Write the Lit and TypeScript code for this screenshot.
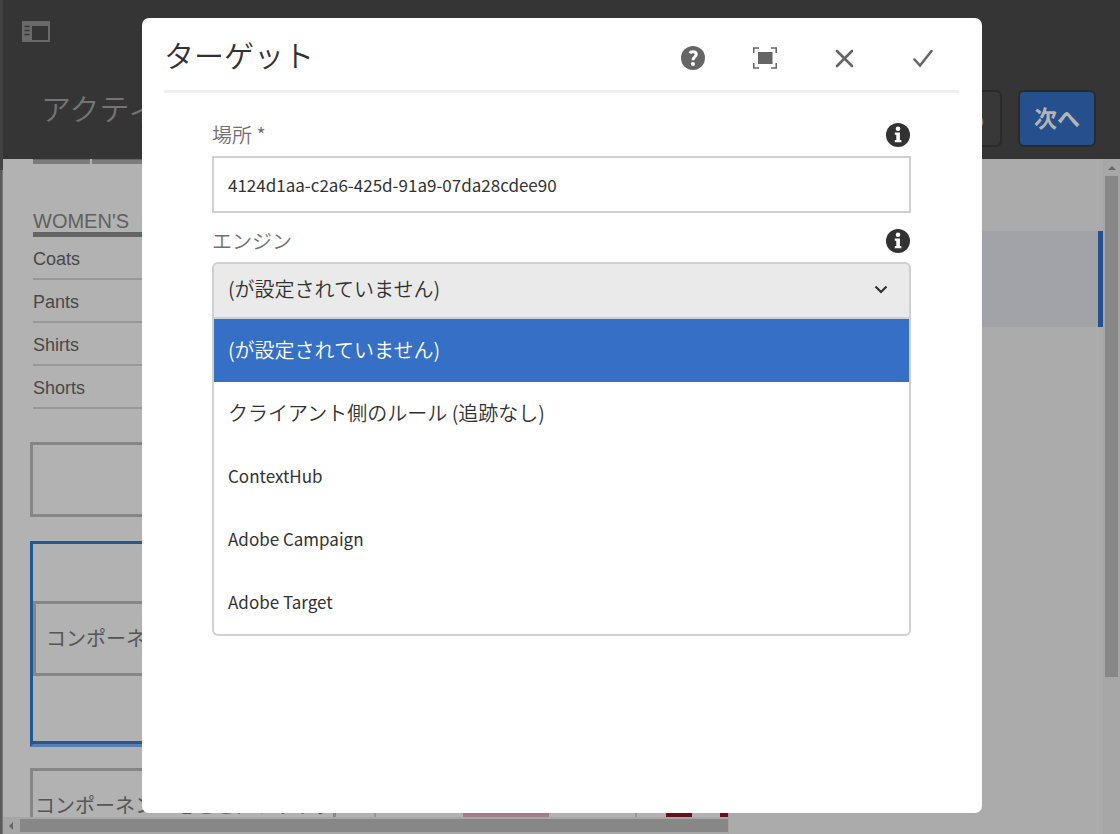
import { LitElement, html, svg, css } from "lit";
import { customElement, state } from "lit/decorators.js";
import { classMap } from "lit/directives/class-map.js";

const icons = {
  rail: svg`<rect width="28" height="21" rx="1" fill="#6a6a6a"/><rect x="10" y="5" width="16" height="14" fill="#353535"/><path d="M2.500 5.500h5M2.500 9.500h5M2.500 13.500h5" stroke="#353535" stroke-width="1.300"/>`,
  help: svg`<circle cx="12" cy="12" r="12" fill="#656565"/><path d="M8.700 7.200C9.700 5.300 14.900 4.700 15.300 8.200C15.500 10.600 12 11 12 14.200" fill="none" stroke="#fff" stroke-width="3"/><circle cx="11.900" cy="18" r="2.100" fill="#fff"/>`,
  full: svg`<path d="M.75 6V1H6M18 1H23.250V6M23.250 16V21H18M6 21H.75V16" fill="none" stroke="#656565" stroke-width="1.500"/><rect x="5" y="5" width="14.500" height="12" fill="#656565"/>`,
  close: svg`<path d="M2 2L17 17M17 2L2 17" stroke="#656565" stroke-width="2.600" stroke-linecap="round"/>`,
  check: svg`<path d="M1.500 10.500L7 16.500L18.500 2" fill="none" stroke="#656565" stroke-width="2.500" stroke-linecap="round"/>`,
  info: svg`<circle cx="12" cy="12" r="12" fill="#323232"/><circle cx="12" cy="5.800" r="2.300" fill="#fff"/><path d="M8.800 9.500H13.900V17H15.400V19.200H8.800V17H10.300V11.700H8.800Z" fill="#fff"/>`,
};

@customElement("app-root")
export class AppRoot extends LitElement {
  @state() selected = 0;

  private engines = [
    "(が設定されていません)",
    "クライアント側のルール (追跡なし)",
    "ContextHub",
    "Adobe Campaign",
    "Adobe Target",
  ];

  static styles = css`
    :host {
      display: grid;
      grid-template-columns: 3px minmax(0, 1fr);
      grid-template-rows: minmax(0, 1fr);
      position: relative;
      height: 100vh;
      overflow: hidden;
      background: #ababab;
      color: #323232;
      font-family: "Noto Sans CJK JP", sans-serif;
      font-size: 20px;
      line-height: 28px;
    }
    * { box-sizing: border-box; }
    button, input, select { font: inherit; color: inherit; margin: 0; }
    svg { display: block; flex: none; }
    .edge { display: grid; grid-template-rows: 170px 1fr; }
    .edge-top { background: #424242; }
    .edge-rest { background: #5b5b5b; border-right: 1px solid #777; }
    .page { display: grid; grid-template-rows: 159px minmax(0, 1fr); min-height: 0; }
    .topbar {
      background: #353535;
      display: flex;
      flex-direction: column;
      gap: 48px;
      padding: 21px 24px 0 19px;
    }
    .rail-toggle { border: 0; background: none; padding: 0; align-self: flex-start; }
    .title-row { display: flex; align-items: flex-start; gap: 16px; padding-left: 19px; }
    .title-row h1 {
      flex: 1;
      margin: 0;
      font-size: 30px;
      line-height: 34px;
      font-weight: 350;
      color: #747474;
    }
    .btn {
      height: 57px;
      padding: 0 14px 4px;
      border: 2px solid #2a2a2a;
      border-radius: 6px;
      background: #383838;
      color: #777;
      font-size: 23px;
      font-weight: 700;
    }
    .btn.primary { background: #264f8d; color: #b4b4b4; }
    .body {
      display: grid;
      grid-template-columns: minmax(0, 725fr) minmax(0, 375fr) 17px;
      grid-template-rows: minmax(0, 1fr);
      min-height: 0;
    }
    .stage { display: flex; flex-direction: column; background: #b2b2b2; min-height: 0; }
    .canvas { flex: 1; min-height: 0; overflow: hidden; padding-left: 27px; }
    .tabs { display: flex; gap: 2px; padding-left: 3px; height: 5px; margin-bottom: 44px; }
    .tabs span { height: 5px; background: #7c7c7c; width: 57px; border-top: 1px solid #666; }
    .tabs span.wide { width: 400px; }
    .nav { width: 303px; margin-left: 3px; font-family: "Liberation Sans", sans-serif; }
    .nav h2 {
      margin: 0;
      padding-top: 2px;
      font-size: 20px;
      line-height: 22px;
      font-weight: 400;
      color: #606060;
      border-bottom: 5px solid #646464;
    }
    .nav ul { list-style: none; margin: 0; padding: 0; }
    .nav li { height: 43px; padding-top: 2px; border-bottom: 2px solid #989898; display: flex; align-items: center; }
    .nav a { font-size: 18px; color: #484848; text-decoration: none; }
    .slot { width: 306px; height: 75px; border: 3px solid #868686; margin-top: 33px; display: flex; align-items: center; color: #555; }
    .target { width: 306px; height: 206px; border: 3px solid #1f5a96; box-shadow: inset 0 -3px #1f5a96; border-bottom-color: #587fae; margin-top: 24px; padding-top: 57px; }
    .target .slot { width: 100%; margin: 0; padding: 0 0 2px 10px; white-space: nowrap; overflow: hidden; }
    .drop-row { display: flex; gap: 38px; margin-top: 21px; }
    .drop-row .slot { margin: 0; padding: 0 0 2px 2px; flex: none; white-space: nowrap; }
    .product { width: 263px; height: 75px; flex: none; border: 2px solid #989898; display: flex; justify-content: center; }
    .pink { width: 86px; background: #a27c8d; }
    .shoes { display: flex; gap: 28px; margin-left: -9px; }
    .shoes span { width: 26px; height: 75px; background: #68101d; }
    .hbar { height: 17px; background: #a7a7a7; padding: 2px 0 2px 5px; display: flex; align-items: center; gap: 6px; }
    .thumb { background: #878787; }
    .hbar .thumb { flex: 1; height: 13px; }
    .panel { border-left: 1px solid #a3a3a3; padding-top: 72px; }
    .step { height: 96px; background: #a2a3a8; border-right: 5px solid #264f8d; }
    .vbar { background: #a7a7a7; padding: 7px 2px 0; display: flex; flex-direction: column; align-items: center; gap: 6px; }
    .vbar .thumb { width: 13px; height: 75%; }
    .layer {
      position: absolute;
      inset: 0;
      padding: 18px 0 21px 4px;
      display: flex;
      justify-content: center;
    }
    .dialog { width: 840px; max-width: 100%; background: #fff; border-radius: 7px; padding: 0 23px 0 22px; }
    .dialog header { display: flex; align-items: flex-start; justify-content: space-between; height: 75px; border-bottom: 3px solid #f0f0f0; }
    .dialog h2 { margin: 0; padding-top: 16px; font-size: 30px; line-height: 40px; font-weight: 350; }
    .actions { display: flex; height: 100%; padding-top: 8px; }
    .actions .group { display: flex; gap: 7px; }
    .actions button { width: 72px; border: 0; background: none; padding: 0; display: flex; align-items: center; justify-content: center; }
    form { padding: 21px 48px 0; }
    .field { margin-bottom: 7px; }
    .label-row { height: 42px; display: flex; align-items: center; justify-content: space-between; }
    .label-row label { color: #707070; font-weight: 350; }
    .info { border: 0; background: none; padding: 0 1px 0 0; }
    .text { display: block; width: 100%; height: 57px; border: 2px solid #d0d0d0; padding: 0 14px; font-size: 17px; background: #fff; outline: 0; }
    .combo { position: relative; }
    .combo select {
      appearance: none;
      display: block;
      width: 100%;
      height: 57px;
      border: 2px solid #d0d0d0;
      border-radius: 6px 6px 0 0;
      background: #eaeaea;
      padding: 0 48px 4px 14px;
      font-weight: 350;
      opacity: 1;
    }
    .chevron { position: absolute; right: 23px; top: 23px; pointer-events: none; }
    .list {
      position: absolute;
      left: 0;
      right: 0;
      top: 57px;
      margin: 0;
      padding: 0;
      list-style: none;
      border: 2px solid #d0d0d0;
      border-top: 0;
      border-radius: 0 0 6px 6px;
      background: #fff;
      overflow: hidden;
    }
    .option { height: 63px; padding: 0 14px 2px; display: flex; align-items: center; font-weight: 350; cursor: pointer; }
    .option.latin { font-size: 17px; font-weight: 400; }
    .option.on { background: #3570c6; color: #fff; }
  `;

  private icon(shape: unknown, w: number, h: number) {
    return html`<svg width=${w} height=${h} viewBox="0 0 ${w} ${h}" aria-hidden="true">${shape}</svg>`;
  }

  render() {
    return html`
      <div class="edge"><div class="edge-top"></div><div class="edge-rest"></div></div>
      <div class="page">
        <div class="topbar">
          <button class="rail-toggle" aria-label="サイドパネル">${this.icon(icons.rail, 28, 21)}</button>
          <div class="title-row">
            <h1>アクティ</h1>
            <button class="btn">戻る</button>
            <button class="btn primary">次へ</button>
          </div>
        </div>
        <div class="body">
          <div class="stage">
            <div class="canvas">
              <div class="tabs"><span></span><span class="wide"></span></div>
              <nav class="nav">
                <h2>WOMEN'S</h2>
                <ul>
                  ${["Coats", "Pants", "Shirts", "Shorts"].map((n) => html`<li><a href="#">${n}</a></li>`)}
                </ul>
              </nav>
              <div class="slot"></div>
              <div class="target"><div class="slot">コンポーネント</div></div>
              <div class="drop-row">
                <div class="slot">コンポーネントをここにドラッグ</div>
                <div class="product"><div class="pink"></div></div>
                <div class="shoes"><span></span><span></span></div>
              </div>
            </div>
            <div class="hbar">
              <svg width="6" height="8" viewBox="0 0 6 8"><path d="M5 0V8L1 4Z" fill="#666"/></svg>
              <div class="thumb"></div>
            </div>
          </div>
          <div class="panel"><div class="step"></div></div>
          <div class="vbar">
            <svg width="8" height="4" viewBox="0 0 8 4"><path d="M0 4H8L4 0Z" fill="#666"/></svg>
            <div class="thumb"></div>
          </div>
        </div>
      </div>
      <div class="layer">
        <section class="dialog" role="dialog" aria-labelledby="dialog-title">
          <header>
            <h2 id="dialog-title">ターゲット</h2>
            <div class="actions">
              <button aria-label="ヘルプ">${this.icon(icons.help, 24, 24)}</button>
              <div class="group">
                <button aria-label="全画面">${this.icon(icons.full, 24, 22)}</button>
                <button aria-label="閉じる">${this.icon(icons.close, 19, 19)}</button>
                <button aria-label="完了">${this.icon(icons.check, 20, 19)}</button>
              </div>
            </div>
          </header>
          <form @submit=${(e: Event) => e.preventDefault()}>
            <div class="field">
              <div class="label-row">
                <label for="location">場所 *</label>
                <button type="button" class="info" aria-label="情報">${this.icon(icons.info, 24, 24)}</button>
              </div>
              <input class="text" id="location" type="text" value="4124d1aa-c2a6-425d-91a9-07da28cdee90" />
            </div>
            <div class="field">
              <div class="label-row">
                <label for="engine">エンジン</label>
                <button type="button" class="info" aria-label="情報">${this.icon(icons.info, 24, 24)}</button>
              </div>
              <div class="combo">
                <select id="engine" @change=${(e: Event) => (this.selected = (e.target as HTMLSelectElement).selectedIndex)}>
                  ${this.engines.map((n, i) => html`<option ?selected=${i === this.selected}>${n}</option>`)}
                </select>
                <svg class="chevron" width="14" height="10" viewBox="0 0 14 10"><path d="M1.500 1.500L7 7L12.500 1.500" fill="none" stroke="#323232" stroke-width="2.200"/></svg>
                <ul class="list" role="listbox" aria-label="エンジン">
                  ${this.engines.map(
                    (n, i) => html`<li
                      role="option"
                      aria-selected=${i === this.selected}
                      class=${classMap({ option: true, on: i === this.selected, latin: i > 1 })}
                      @click=${() => (this.selected = i)}
                    >${n}</li>`
                  )}
                </ul>
              </div>
            </div>
          </form>
        </section>
      </div>
    `;
  }
}
